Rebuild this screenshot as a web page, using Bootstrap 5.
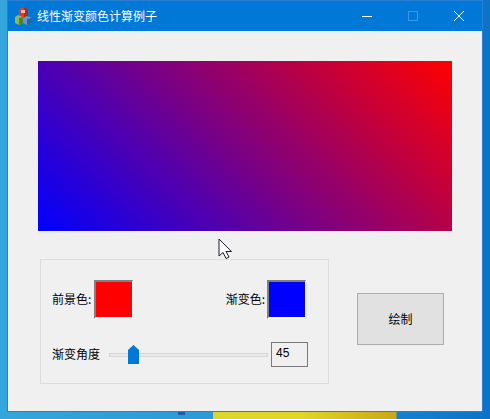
<!DOCTYPE html>
<html lang="zh-CN">
<head>
  <meta charset="UTF-8" />
  <meta name="viewport" content="width=device-width, initial-scale=1.0" />
  <title>线性渐变颜色计算例子</title>
  <link href="https://cdn.jsdelivr.net/npm/bootstrap@5.3.0/dist/css/bootstrap.min.css" rel="stylesheet">
  <style>
    html, body { height: 100%; overflow: hidden; }
    body {
      font-family: "Noto Sans CJK SC", "Liberation Sans", sans-serif;
      font-size: 12px;
      line-height: 1.2;
      color: #000;
      padding: 0 7px;
      background:
        linear-gradient(#1a5fa8, #1a5fa8) 178px 412px / 7px 3px no-repeat,
        linear-gradient(90deg, transparent 213px, #dcd62c 213px, #e2d626 300px, #c9a816 396px, transparent 397px) bottom / 100% 7px no-repeat,
        linear-gradient(90deg, #34a6dc 0, #2a9ad8 210px, #1580d2 400px, #0c74c8 100%);
    }
    .app-window { width: 476px; height: 412px; border: 1px solid #2a7fd2; background: #f0f0f0; position: relative; }
    .title-bar { height: 30px; background: #0078d7; color: #fff; padding-left: 7px; }
    .title-text { margin-left: 5px; white-space: nowrap; }
    .win-btn { width: 46px; height: 30px; }
    .win-btn svg { display: block; }
    .client-area { padding: 30px 30px 0; }
    .paint-box { height: 170px; background: linear-gradient(45deg, #00f, #f00); }
    .lower-area { margin: 28px 0 0 2px; }
    .option-group { width: 289px; height: 125px; border: 1px solid #dcdcdc; padding: 20px 21px 0 11px; }
    .field-label { white-space: nowrap; flex: none; }
    .color-pick { width: 39px; height: 39px; border-style: solid; border-width: 2px 1px 2px 2px; border-color: #808080 #fff #fff #808080; margin-left: 3px; }
    .color-pick-end { margin-left: 2px; margin-right: 1px; }
    .pick-red { background: #f00; }
    .pick-blue { background: #00f; }
    .angle-row { margin-top: 23px; height: 25px; }
    .slide-track { width: 159px; height: 4px; flex: none; margin-left: 9px; margin-right: 3px; background: #e7eaea; border: 1px solid #d6d6d6; position: relative; }
    .slide-thumb { position: absolute; left: 18px; top: -9px; display: block; }
    .angle-input.form-control {
      width: 37px; height: 25px; padding: 2px 4px 5px; font-size: 12px; line-height: 14px;
      font-family: "Liberation Sans", sans-serif;
      color: #000; background: #f0f0f0; border: 1px solid #7a7a7a; border-radius: 0; box-shadow: none;
      flex: none;
    }
    .draw-btn.btn {
      width: 87px; height: 52px; margin: 34px 0 0 28px; padding: 0;
      font-size: 12px; color: #000; background: #e1e1e1; border: 1px solid #adadad; border-radius: 0;
    }
    .mouse-arrow { position: absolute; left: 210px; top: 237px; display: block; }
  </style>
</head>
<body>
  <div class="app-window">
    <div class="title-bar d-flex align-items-center">
      <svg width="17" height="18" viewBox="0 0 17 18" class="flex-shrink-0">
        <path d="M4 2l5-2 4 2v7l-4 2-5-2z" fill="#d8402c"/>
        <path d="M9 0l4 2v7l-4 2z" fill="#b02a1c"/>
        <rect x="6" y="3" width="4" height="3" fill="#f2b6a4"/>
        <path d="M0 10l3-2 5 2v6l-4 2-4-2z" fill="#8fb858"/>
        <path d="M4 11l4-1v6l-4 2z" fill="#55802e"/>
        <path d="M8 11l4-2 5 2v5l-5 2-4-2z" fill="#5c9ccb"/>
        <path d="M12 12l5-1v5l-5 2z" fill="#2c6593"/>
      </svg>
      <span class="title-text flex-grow-1">线性渐变颜色计算例子</span>
      <div class="win-btn d-flex align-items-center justify-content-center">
        <svg width="10" height="10"><path d="M0 5.500h10" stroke="#fff" fill="none"/></svg>
      </div>
      <div class="win-btn d-flex align-items-center justify-content-center">
        <svg width="10" height="10"><rect x=".5" y=".5" width="9" height="9" stroke="#3a96e0" fill="none"/></svg>
      </div>
      <div class="win-btn d-flex align-items-center justify-content-center">
        <svg width="10" height="10"><path d="M0 0l10 10M10 0L0 10" stroke="#fff" fill="none"/></svg>
      </div>
    </div>
    <div class="client-area">
      <div class="paint-box"></div>
      <div class="lower-area d-flex align-items-start">
        <div class="option-group">
          <div class="d-flex justify-content-between align-items-center">
            <div class="d-flex align-items-center">
              <span class="field-label">前景色:</span>
              <div class="color-pick pick-red"></div>
            </div>
            <div class="d-flex align-items-center">
              <span class="field-label">渐变色:</span>
              <div class="color-pick color-pick-end pick-blue"></div>
            </div>
          </div>
          <div class="angle-row d-flex align-items-center">
            <span class="field-label">渐变角度</span>
            <div class="slide-track">
              <svg class="slide-thumb" width="11" height="19" viewBox="0 0 11 19"><path d="M0 19V5l5.500-5L11 5v14z" fill="#0078d7"/></svg>
            </div>
            <input type="text" class="angle-input form-control" value="45" />
          </div>
        </div>
        <button type="button" class="draw-btn btn">绘制</button>
      </div>
    </div>
    <svg class="mouse-arrow" width="15" height="21" viewBox="0 0 15 21">
      <path d="M1 1v17l4-3.500 3 6 3-1.500-3-5.500h5.500z" fill="#fff" stroke="#1c1c28" stroke-width="1"/>
    </svg>
  </div>
  <script src="https://cdn.jsdelivr.net/npm/bootstrap@5.3.0/dist/js/bootstrap.bundle.min.js"></script>
</body>
</html>
